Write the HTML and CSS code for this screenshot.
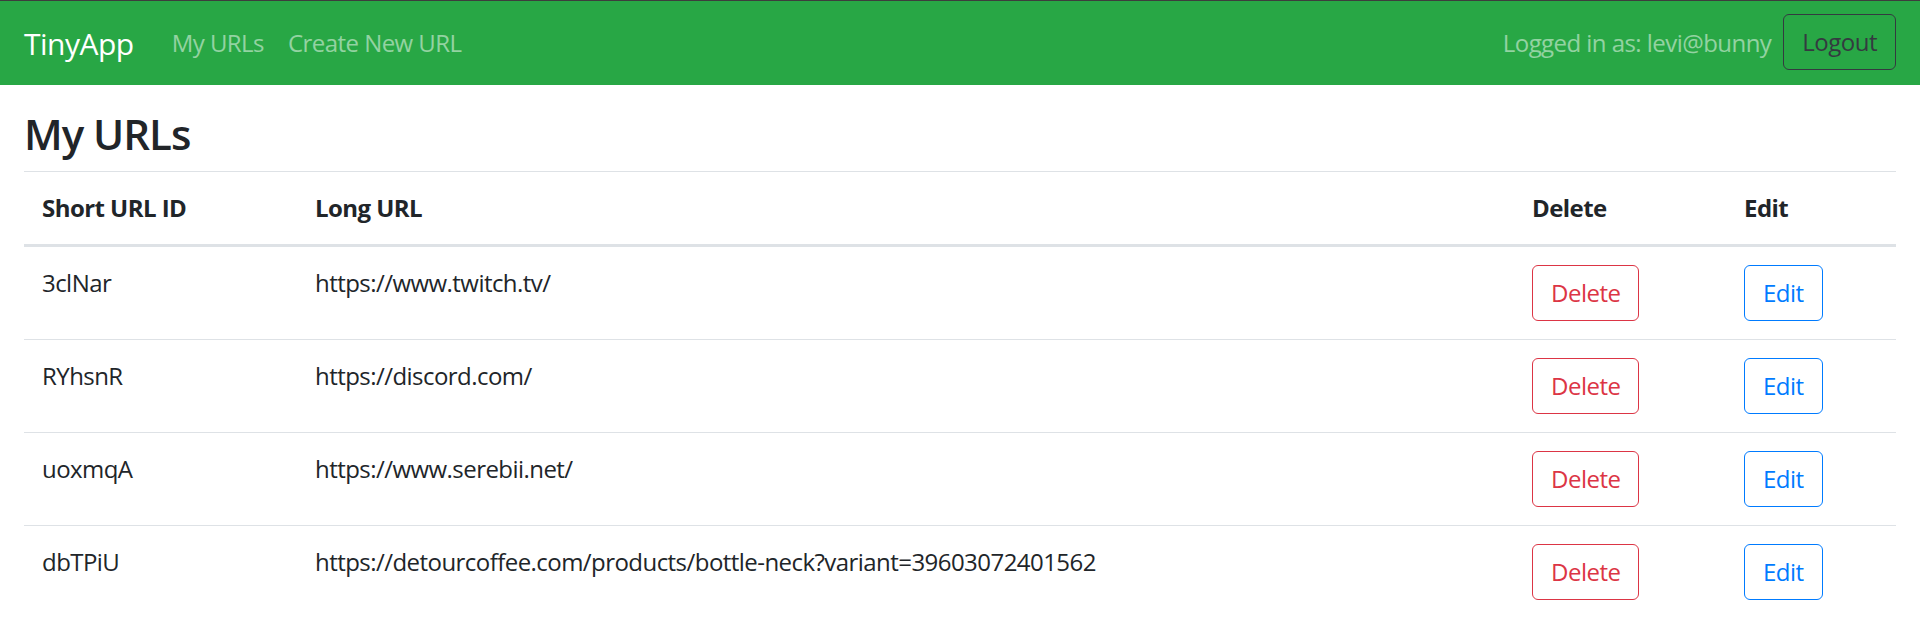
FILE: index.html
```html
<!DOCTYPE html>
<html lang="en">
<head>
<meta charset="utf-8">
<title>TinyApp - My URLs</title>
<link rel="stylesheet" href="styles.css">
</head>
<body>
<nav class="navbar">
  <div class="nav-left">
    <a class="brand" href="#">TinyApp</a>
    <a class="nav-link" href="#">My URLs</a>
    <a class="nav-link" href="#">Create New URL</a>
  </div>
  <div class="nav-right">
    <span class="nav-text">Logged in as: levi@bunny</span>
    <button class="btn btn-dark">Logout</button>
  </div>
</nav>
<main class="content">
  <h3 class="title">My URLs</h3>
  <table class="table">
    <colgroup>
      <col class="c1"><col class="c2"><col class="c3"><col class="c4">
    </colgroup>
    <thead>
      <tr><th>Short URL ID</th><th>Long URL</th><th>Delete</th><th>Edit</th></tr>
    </thead>
    <tbody>
      <tr><td>3clNar</td><td>https://www.twitch.tv/</td><td><button class="btn btn-danger">Delete</button></td><td><button class="btn btn-primary">Edit</button></td></tr>
      <tr><td>RYhsnR</td><td>https://discord.com/</td><td><button class="btn btn-danger">Delete</button></td><td><button class="btn btn-primary">Edit</button></td></tr>
      <tr><td>uoxmqA</td><td>https://www.serebii.net/</td><td><button class="btn btn-danger">Delete</button></td><td><button class="btn btn-primary">Edit</button></td></tr>
      <tr><td>dbTPiU</td><td>https://detourcoffee.com/products/bottle-neck?variant=39603072401562</td><td><button class="btn btn-danger">Delete</button></td><td><button class="btn btn-primary">Edit</button></td></tr>
    </tbody>
  </table>
</main>
</body>
</html>
```

FILE: styles.css
```css
* { box-sizing: border-box; }
html, body { margin: 0; padding: 0; }
body {
  font-family: "Open Sans", "Noto Sans", sans-serif;
  font-size: 24px;
  line-height: 36px;
  letter-spacing: -0.55px;
  color: #212529;
  background: #fff;
}
.navbar {
  display: flex;
  align-items: center;
  justify-content: space-between;
  background: #28a745;
  border-top: 1px solid #3d3d3d;
  padding: 12px 24px 12px 24px;
  height: 85px;
}
.nav-left, .nav-right { display: flex; align-items: center; }
.brand {
  color: #fff;
  text-decoration: none;
  font-size: 30px;
  line-height: 45px;
  letter-spacing: -0.5px;
  padding: 7px 0;
  margin-right: 26px;
}
.nav-link {
  color: rgba(255,255,255,0.5);
  text-decoration: none;
  padding: 12px 12px;
}
.nav-text {
  color: rgba(255,255,255,0.5);
  padding-right: 12px;
}
.btn {
  font-family: inherit;
  font-size: 24px;
  line-height: 36px;
  letter-spacing: -0.5px;
  padding: 9px 18px;
  border-radius: 6px;
  background: transparent;
  border: 1px solid;
  cursor: pointer;
}
.btn-dark { color: #343a40; border-color: #343a40; margin-top: -2px; }
.btn-danger { color: #dc3545; border-color: #dc3545; }
.btn-primary { color: #007bff; border-color: #007bff; }
.content { padding: 0 24px; }
.title {
  font-size: 42px;
  font-weight: 600;
  line-height: 50.4px;
  letter-spacing: -1px;
  margin: 24px 0 12px 0;
}
.table {
  width: 100%;
  border-collapse: collapse;
  table-layout: fixed;
}
.c1 { width: 273px; }
.c2 { width: 1217px; }
.c3 { width: 212px; }
.c4 { width: 170px; }
.table th, .table td {
  text-align: left;
  vertical-align: top;
  padding: 18px;
  border-top: 1px solid #dee2e6;
}
.table th { font-weight: 700; border-bottom: 3px solid #dee2e6; }
.table td { white-space: nowrap; }
```
